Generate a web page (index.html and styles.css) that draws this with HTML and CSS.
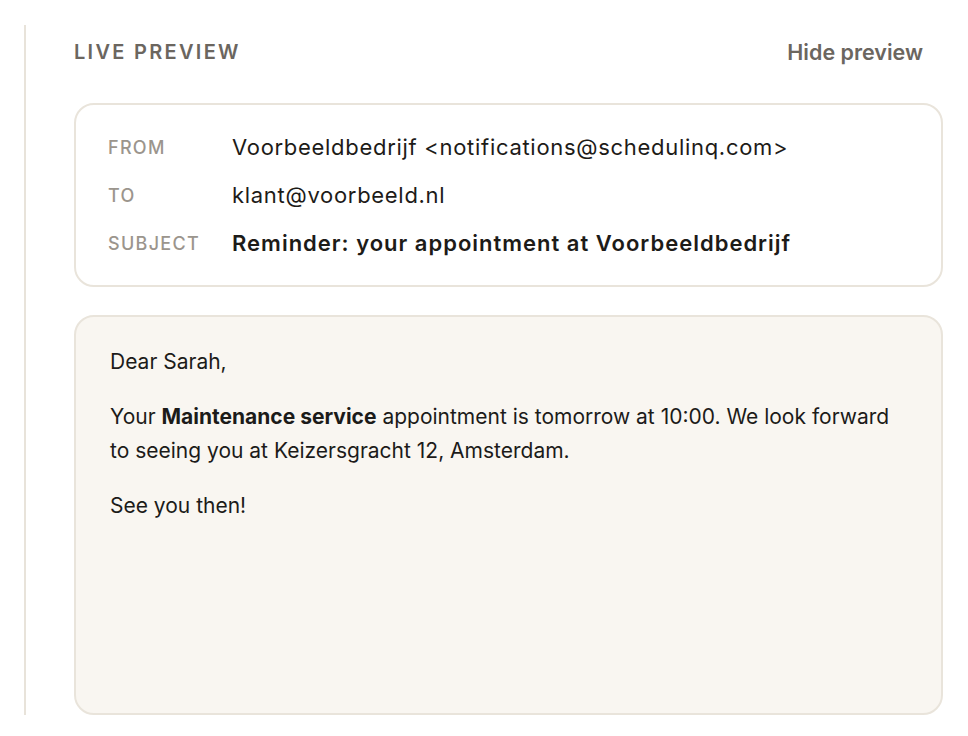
FILE: index.html
```html
<!DOCTYPE html>
<html lang="en">
<head>
<meta charset="utf-8">
<title>Live preview</title>
<link rel="stylesheet" href="styles.css">
</head>
<body>
<div class="page">
  <section class="preview">
    <header class="preview-head">
      <h2 class="preview-title">LIVE PREVIEW</h2>
      <button class="hide-btn" type="button">Hide preview</button>
    </header>
    <div class="meta-card">
      <div class="meta-row"><span class="meta-label">FROM</span><span class="meta-value">Voorbeeldbedrijf &lt;notifications@schedulinq.com&gt;</span></div>
      <div class="meta-row"><span class="meta-label">TO</span><span class="meta-value">klant@voorbeeld.nl</span></div>
      <div class="meta-row"><span class="meta-label">SUBJECT</span><span class="meta-value strong">Reminder: your appointment at Voorbeeldbedrijf</span></div>
    </div>
    <div class="body-card">
      <p>Dear Sarah,</p>
      <p>Your <strong>Maintenance service</strong> appointment is tomorrow at 10:00. We look forward to seeing you at Keizersgracht 12, Amsterdam.</p>
      <p>See you then!</p>
    </div>
  </section>
</div>
</body>
</html>
```
FILE: styles.css
```css
html, body {
  margin: 0;
  padding: 0;
  background: #ffffff;
}
body {
  font-family: "Inter", "Liberation Sans", sans-serif;
  color: #1d1b18;
}
.page {
  padding: 25px 25px 21px 24px;
  height: 736px;
  box-sizing: border-box;
  display: flex;
}
.preview {
  flex: 1;
  border-left: 2px solid #e8e3da;
  padding-left: 48px;
  display: flex;
  flex-direction: column;
}
.preview-head {
  display: flex;
  justify-content: space-between;
  align-items: center;
  height: 54px;
  padding-right: 20px;
  margin-bottom: 24px;
}
.preview-title {
  margin: 0;
  font-size: 20px;
  font-weight: 600;
  letter-spacing: 2.3px;
  color: #6b665f;
}
.hide-btn {
  border: 0;
  background: none;
  padding: 0;
  font-family: inherit;
  font-size: 21.5px;
  font-weight: 600;
  color: #6b665f;
  cursor: pointer;
}
.meta-card {
  border: 2px solid #e9e4db;
  border-radius: 20px;
  padding: 18px 32px;
  margin-bottom: 28px;
}
.meta-row {
  display: flex;
  align-items: center;
  height: 48px;
}
.meta-label {
  width: 124px;
  flex: none;
  font-size: 18px;
  font-weight: 500;
  letter-spacing: 1.3px;
  color: #9b958d;
}
.meta-value {
  font-size: 22px;
  letter-spacing: 0.7px;
  color: #1d1b18;
}
.meta-value.strong {
  font-weight: 600;
  letter-spacing: 1px;
}
.body-card {
  flex: 1;
  background: #f9f6f1;
  border: 2px solid #e9e4db;
  border-radius: 20px;
  padding: 28px 34px;
  font-size: 21px;
  line-height: 34px;
  color: #1c1b19;
}
.body-card p {
  margin: 0 0 21px;
}
.body-card strong {
  font-weight: 700;
}
```
